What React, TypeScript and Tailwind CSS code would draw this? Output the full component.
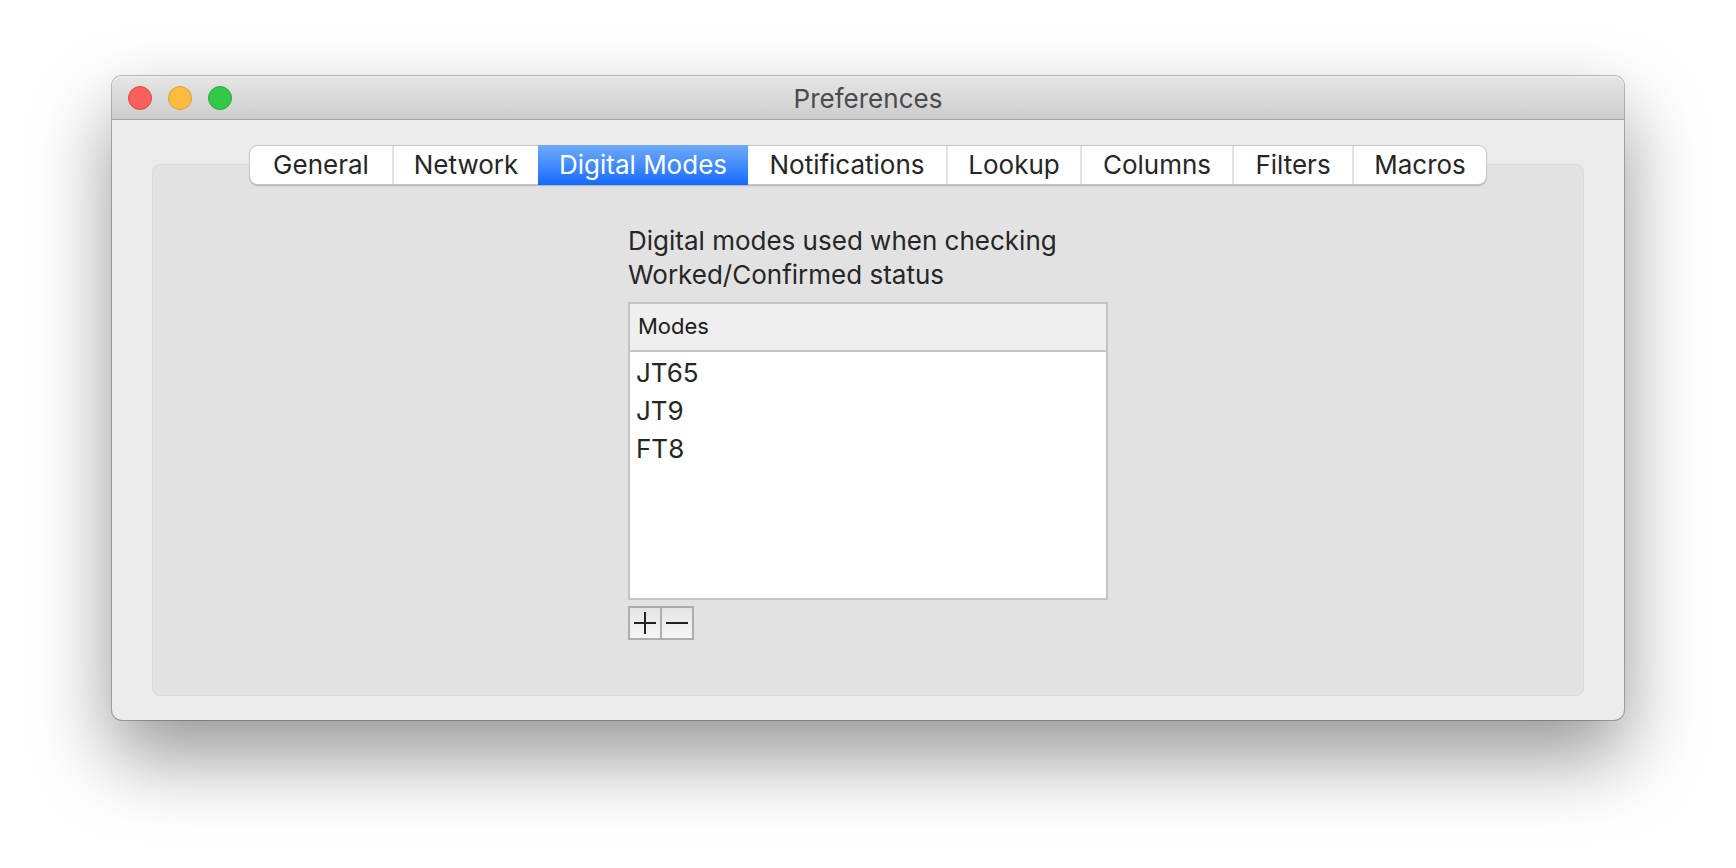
import { useState } from "react";
import clsx from "clsx";

const tabs = [
  { name: "General", width: "w-36" },
  { name: "Network", width: "w-36" },
  { name: "Digital Modes", width: "w-[210px]" },
  { name: "Notifications", width: "w-[200px]" },
  { name: "Lookup", width: "w-[134px]" },
  { name: "Columns", width: "w-[152px]" },
  { name: "Filters", width: "w-[120px]" },
  { name: "Macros", width: "w-[132px]" },
];

const modes = ["JT65", "JT9", "FT8"];

const lights = [
  { label: "Close", style: "bg-[#fc605c] border-[#e2463f]" },
  { label: "Minimize", style: "bg-[#fdbc40] border-[#dfa032]" },
  { label: "Zoom", style: "bg-[#34c84a] border-[#27ac35]" },
];

function TitleBar() {
  return (
    <header className="grid h-11 grid-cols-[1fr_auto_1fr] items-center rounded-t-[10px] border-b border-[#a8a8a8] bg-linear-to-b from-[#e6e6e6] to-[#cdcdcd] px-4 shadow-[inset_0_1px_0_#f4f4f4]">
      <div className="flex gap-4">
        {lights.map((l) => (
          <button key={l.label} type="button" aria-label={l.label} className={clsx("size-6 rounded-full border", l.style)} />
        ))}
      </div>
      <h1 className="pt-0.5 text-[26px] leading-8 text-[#4b4b4b]">Preferences</h1>
    </header>
  );
}

function TabBar({ active, onSelect }: { active: string; onSelect: (name: string) => void }) {
  const activeIndex = tabs.findIndex((t) => t.name === active);
  return (
    <div
      role="tablist"
      className="relative z-10 flex h-[38px] rounded-lg bg-white shadow-[0_0_0_1px_#c6c6c6,0_1px_0_1px_#a4a4a466,0_2px_2px_#00000026]"
    >
      {tabs.map((t, i) => {
        const selected = i === activeIndex;
        const divided = !selected && i !== activeIndex - 1 && i !== tabs.length - 1;
        return (
          <button
            key={t.name}
            type="button"
            role="tab"
            aria-selected={selected}
            onClick={() => onSelect(t.name)}
            className={clsx(
              "text-[26px] leading-8 whitespace-nowrap",
              t.width,
              selected ? "-my-px bg-linear-to-b from-[#6eaaf8] to-[#1169ff] text-white" : "text-[#262626]",
              divided && "border-r-2 border-[#e2e2e2]",
            )}
          >
            {t.name}
          </button>
        );
      })}
    </div>
  );
}

function DigitalModes() {
  return (
    <div className="w-[480px]">
      <p id="modes-caption" className="mb-2.5 text-[26px] leading-[34px] text-[#262626]">
        Digital modes used when checking Worked/Confirmed status
      </p>
      <div className="h-[298px] border-2 border-[#c4c4c4] bg-white">
        <table aria-labelledby="modes-caption" className="w-full border-separate border-spacing-0 text-left">
          <thead>
            <tr>
              <th className="h-12 border-b-2 border-[#c4c4c4] bg-[#efefef] px-2 pb-0.5 text-[22px] leading-7 font-normal text-[#1c1c1c]">
                Modes
              </th>
            </tr>
          </thead>
          <tbody className="before:block before:h-0.5">
            {modes.map((mode) => (
              <tr key={mode}>
                <td className="h-[38px] px-1.5 text-[26px] leading-[38px] text-[#262626]">{mode}</td>
              </tr>
            ))}
          </tbody>
        </table>
      </div>
      <div className="mt-1.5 inline-flex border-2 border-[#aeaeae] bg-linear-to-b from-[#e4e4e4] to-[#f6f6f6]">
        <button type="button" aria-label="Add mode" className="border-r-2 border-[#aeaeae]">
          <svg viewBox="0 0 30 30" className="size-[30px]" stroke="#222" strokeWidth="2">
            <path d="M4 15H26M15 4V26" />
          </svg>
        </button>
        <button type="button" aria-label="Remove mode">
          <svg viewBox="0 0 30 30" className="size-[30px]" stroke="#222" strokeWidth="2">
            <path d="M4 15H26" />
          </svg>
        </button>
      </div>
    </div>
  );
}

export default function App() {
  const [active, setActive] = useState("Digital Modes");
  return (
    <div className="min-h-screen overflow-hidden bg-white px-28 pt-19 pb-37 font-['Inter',sans-serif]">
      <main className="rounded-[10px] bg-[#ebebeb] shadow-[0_0_0_1px_#00000040,0_36px_80px_#0000006b]">
        <TitleBar />
        <div className="flex flex-col items-center px-10 pt-[26px] pb-6">
          <TabBar active={active} onSelect={setActive} />
          <section
            role="tabpanel"
            aria-label={active}
            className="-mt-5 flex min-h-[532px] w-full justify-center rounded-lg border border-[#dadada] bg-[#e2e2e2] pt-[59px]"
          >
            <DigitalModes />
          </section>
        </div>
      </main>
    </div>
  );
}
